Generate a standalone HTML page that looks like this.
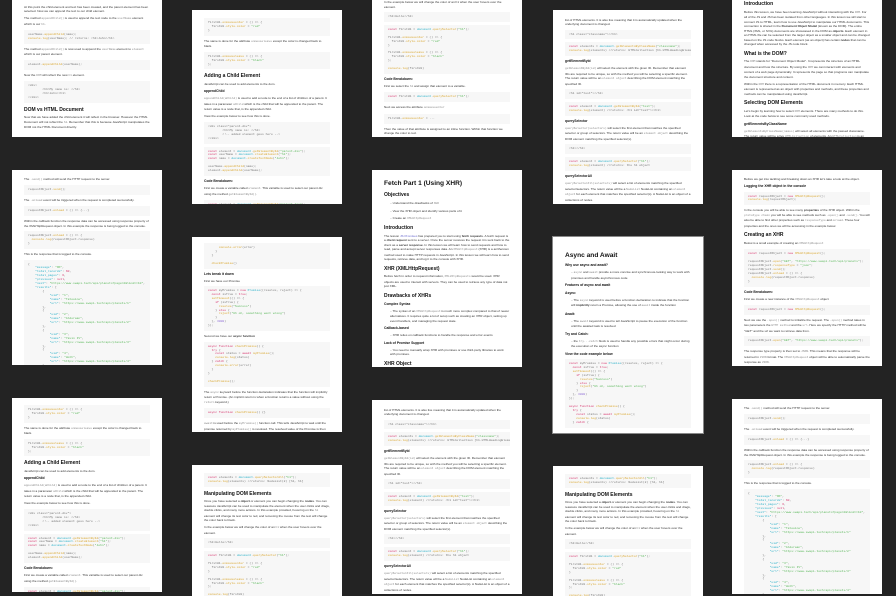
<!DOCTYPE html>
<html><head><meta charset="utf-8"><style>
*{margin:0;padding:0;box-sizing:border-box}
html,body{width:896px;height:596px;overflow:hidden;background:#232323;font-family:"Liberation Sans",sans-serif;color:#222}
.c{position:absolute;width:150px;background:#fff;overflow:hidden;padding:0 12px}
p,li{font-size:3.1px;line-height:4.5px;margin:2.5px 0;color:#333}
ul{padding-left:6px;list-style:none}
li:before{content:"– ";color:#777}
pre{font-family:"Liberation Mono",monospace;font-size:3px;line-height:3.9px;background:#f7f7f7;padding:3px 4px;margin:3px 0;color:#777;white-space:pre;overflow:hidden}
h1{font-size:6.6px;line-height:8px;font-weight:bold;margin:5px 0 3px;color:#111}
h2{font-size:5px;line-height:6px;font-weight:bold;margin:4px 0 2px;color:#111}
h3{font-size:3.4px;line-height:4.5px;font-weight:bold;margin:3px 0 2px;color:#111}
code{font-family:"Liberation Mono",monospace;color:#888;font-size:2.9px}
.k{color:#d6336c}.f{color:#2ab0c8}.s{color:#5cb85c}.m{color:#d9a62e}.v{color:#8f6ed5}
</style></head><body>

<div class="c" style="left:12px;top:0;height:137px;padding-top:2px">
<p>At this point the child element and text has been created, and the parent element has been selected. Now we can append the text to our child element.</p>
<p>The method <code>appendChild()</code> is used to append the text node to the <code>userName</code> element which is our <code>h1</code>.</p>
<pre>userName.<span class="m">appendChild</span>(name);
<span class="m">console.log</span>(userName); // returns: &lt;h1&gt;John&lt;/h1&gt;</pre>
<p>The method <code>appendChild()</code> is now used to append the <code>userName</code> element to <code>element</code> which is our parent element.</p>
<pre>element.<span class="m">appendChild</span>(userName);</pre>
<p>Now the <code>DOM</code> will reflect the new <code>h1</code> element.</p>
<pre>&lt;div&gt;
        &lt;h1&gt;My name is: &lt;/h1&gt;
        &lt;h1&gt;John&lt;/h1&gt;
&lt;/div&gt;</pre>
<h2>DOM vs HTML Document</h2>
<p>Now that we have added the child element it will reflect in the browser. However the HTML Document will not reflect the <code>h1</code>. Remember that this is because JavaScript manipulates the DOM not the HTML Document directly.</p>
</div>

<div class="c" style="left:12px;top:170px;height:195px;padding-top:4px">
<p>The <code>.send()</code> method will send the HTTP request to the server.</p>
<pre>requestObject.<span class="m">send</span>();</pre>
<p>The <code>.onload</code> event will be triggered when the request is completed successfully.</p>
<pre>requestObject.<span class="m">onload</span> = () =&gt; {...}</pre>
<p>Within the callback function the response data can be accessed using response property of the XMLHttpRequest object. In this example the response is being logged to the console.</p>
<pre>requestObject.<span class="m">onload</span> = () =&gt; {
  <span class="m">console.log</span>(requestObject.response)
}</pre>
<p>This is the response that is logged to the console.</p>
<pre>{
    <span class="f">"message"</span>: <span class="s">"OK"</span>,
    <span class="f">"total_records"</span>: <span class="k">60</span>,
    <span class="f">"total_pages"</span>: <span class="k">6</span>,
    <span class="f">"previous"</span>: <span class="k">null</span>,
    <span class="f">"next"</span>: <span class="s">"https://www.swapi.tech/api/planets?page=2&amp;limit=10"</span>,
    <span class="f">"results"</span>: [
        {
            <span class="f">"uid"</span>: <span class="s">"1"</span>,
            <span class="f">"name"</span>: <span class="s">"Tatooine"</span>,
            <span class="f">"url"</span>: <span class="s">"https://www.swapi.tech/api/planets/1"</span>
        },
        {
            <span class="f">"uid"</span>: <span class="s">"2"</span>,
            <span class="f">"name"</span>: <span class="s">"Alderaan"</span>,
            <span class="f">"url"</span>: <span class="s">"https://www.swapi.tech/api/planets/2"</span>
        },
        {
            <span class="f">"uid"</span>: <span class="s">"3"</span>,
            <span class="f">"name"</span>: <span class="s">"Yavin IV"</span>,
            <span class="f">"url"</span>: <span class="s">"https://www.swapi.tech/api/planets/3"</span>
        },
        {
            <span class="f">"uid"</span>: <span class="s">"4"</span>,
            <span class="f">"name"</span>: <span class="s">"Hoth"</span>,
            <span class="f">"url"</span>: <span class="s">"https://www.swapi.tech/api/planets/4"</span>
        },</pre>
</div>

<div class="c" style="left:12px;top:398px;height:194px;padding-top:4px">
<pre>firstH1.<span class="m">onmouseenter</span> = () =&gt; {
  firstH1.<span class="m">style.color</span> = <span class="s">"red"</span>
}</pre>
<p>The same is done for the attribute <code>onmouseleave</code> except the color is changed back to black.</p>
<pre>firstH1.<span class="m">onmouseleave</span> = () =&gt; {
  firstH1.<span class="m">style.color</span> = <span class="s">"black"</span>
};</pre>
<h2>Adding a Child Element</h2>
<p>JavaScript can be used to add elements to the dom.</p>
<h3>appendChild</h3>
<p><code>appendChild(aChild)</code> is used to add a node to the end of a list of children of a parent. It takes in a parameter <code>aChild</code> which is the child that will be appended to the parent. The return value is a node that, is the appended child.</p>
<p>View the example below to see how this is done.</p>
<pre>&lt;div class="parent-div"&gt;
        &lt;h1&gt;My name is: &lt;/h1&gt;
        &lt;!-- added element goes here --&gt;
&lt;/div&gt;</pre>
<pre><span class="k">const</span> element = <span class="f">document</span>.<span class="m">getElementById</span>(<span class="s">"parent-div"</span>);
<span class="k">const</span> userName = <span class="f">document</span>.<span class="m">createElement</span>(<span class="s">"h1"</span>);
<span class="k">const</span> name = <span class="f">document</span>.<span class="m">createTextNode</span>(<span class="s">"John"</span>);

userName.<span class="m">appendChild</span>(name);
element.<span class="m">appendChild</span>(userName);</pre>
<h3>Code Breakdown:</h3>
<p>First we create a variable called <code>element</code>. This variable is used to select our parent div using the method <code>getElementById()</code>.</p>
<pre><span class="k">const</span> element = <span class="f">document</span>.<span class="m">getElementById</span>(<span class="s">"parent-div"</span>);
<span class="m">console.log</span>(element); // returns: &lt;div id="parent-div"&gt;...&lt;/div&gt;</pre>
</div>

<div class="c" style="left:192px;top:10px;height:194px;padding-top:5px">
<pre>firstH1.<span class="m">onmouseenter</span> = () =&gt; {
  firstH1.<span class="m">style.color</span> = <span class="s">"red"</span>
}</pre>
<p>The same is done for the attribute <code>onmouseleave</code> except the color is changed back to black.</p>
<pre>firstH1.<span class="m">onmouseleave</span> = () =&gt; {
  firstH1.<span class="m">style.color</span> = <span class="s">"black"</span>
};</pre>
<h2>Adding a Child Element</h2>
<p>JavaScript can be used to add elements to the dom.</p>
<h3>appendChild</h3>
<p><code>appendChild(aChild)</code> is used to add a node to the end of a list of children of a parent. It takes in a parameter <code>aChild</code> which is the child that will be appended to the parent. The return value is a node that, is the appended child.</p>
<p>View the example below to see how this is done.</p>
<pre>&lt;div class="parent-div"&gt;
        &lt;h1&gt;My name is: &lt;/h1&gt;
        &lt;!-- added element goes here --&gt;
&lt;/div&gt;</pre>
<pre><span class="k">const</span> element = <span class="f">document</span>.<span class="m">getElementById</span>(<span class="s">"parent-div"</span>);
<span class="k">const</span> userName = <span class="f">document</span>.<span class="m">createElement</span>(<span class="s">"h1"</span>);
<span class="k">const</span> name = <span class="f">document</span>.<span class="m">createTextNode</span>(<span class="s">"John"</span>);

userName.<span class="m">appendChild</span>(name);
element.<span class="m">appendChild</span>(userName);</pre>
<h3>Code Breakdown:</h3>
<p>First we create a variable called <code>element</code>. This variable is used to select our parent div using the method <code>getElementById()</code>.</p>
<pre><span class="k">const</span> element = <span class="f">document</span>.<span class="m">getElementById</span>(<span class="s">"parent-div"</span>);
<span class="m">console.log</span>(element); // returns: &lt;div id="parent-div"&gt;...&lt;/div&gt;</pre>
</div>

<div class="c" style="left:192px;top:237px;height:195px;padding-top:3px">
<pre>      <span class="m">console.error</span>(error)
    }
  }

  <span class="m">checkPromise</span>()</pre>
<h3>Lets break it down</h3>
<p>First we have our Promise</p>
<pre><span class="k">const</span> myPromise = <span class="k">new</span> <span class="f">Promise</span>((resolve, reject) =&gt; {
  <span class="k">const</span> isTrue = <span class="k">true</span>;
  <span class="m">setTimeout</span>(() =&gt; {
    <span class="k">if</span> (isTrue) {
      <span class="m">resolve</span>(<span class="s">"Success"</span>)
    } <span class="k">else</span> {
      <span class="m">reject</span>(<span class="s">"Uh oh, something went wrong"</span>)
    }
  }, <span class="v">3000</span>)
});</pre>
<p>Second we have our <b>async function</b></p>
<pre><span class="k">async function</span> <span class="m">checkPromise</span>() {
  <span class="k">try</span> {
    <span class="k">const</span> status = <span class="k">await</span> <span class="m">myPromise</span>();
    <span class="m">console.log</span>(status)
  } <span class="k">catch</span> {
    <span class="m">console.error</span>(error)
  }
}

<span class="m">checkPromise</span>();</pre>
<p>The <code>async</code> keyword before the function declaration indicates that the function will implicitly return a Promise. (An implicit return is when a function returns a value without using the <code>return</code> keyword.)</p>
<pre><span class="k">async function</span> <span class="m">checkPromise</span>() {}</pre>
<p><code>await</code> is used before the <code>myPromise()</code> function call. This tells JavaScript to wait until the promise returned by <code>myPromise()</code> is resolved. The resolved value of the Promise is then assigned to the <code>status</code> variable.</p>
</div>

<div class="c" style="left:192px;top:465px;height:131px;padding-top:5px">
<pre><span class="k">const</span> elements = <span class="f">document</span>.<span class="m">querySelectorAll</span>(<span class="s">"h1"</span>);
<span class="m">console.log</span>(elements) //returns: NodeList(2) [h1, h1]</pre>
<h2>Manipulating DOM Elements</h2>
<p>Once you have selected a <b>object</b> or element you can begin changing the <b>nodes</b>. You can reassure JavaScript can be used to manipulate the element when the user clicks and drags, double clicks, and many more actions. In this example provided, hovering on the <code>h1</code> element will change its text color to red, and removing the mouse from the text will change the color back to black.</p>
<p>In the example below we will change the color of an <code>h1</code> when the user hovers over the element.</p>
<pre>&lt;h1&gt;Hello&lt;/h1&gt;</pre>
<pre><span class="k">const</span> firstH1 = <span class="f">document</span>.<span class="m">querySelector</span>(<span class="s">"h1"</span>);

firstH1.<span class="m">onmouseenter</span> = () =&gt; {
  firstH1.<span class="m">style.color</span> = <span class="s">"red"</span>
}

firstH1.<span class="m">onmouseleave</span> = () =&gt; {
  firstH1.<span class="m">style.color</span> = <span class="s">"black"</span>
};

<span class="m">console.log</span>(firstH1)</pre>
<h3>Code Breakdown:</h3>
</div>

<div class="c" style="left:372px;top:0;height:137px;padding-top:0">
<p style="margin-top:0">In the example below we will change the color of an h1 when the user hovers over the element.</p>
<pre>&lt;h1&gt;Hello&lt;/h1&gt;</pre>
<pre><span class="k">const</span> firstH1 = <span class="f">document</span>.<span class="m">querySelector</span>(<span class="s">"h1"</span>);

firstH1.<span class="m">onmouseenter</span> = () =&gt; {
  firstH1.<span class="m">style.color</span> = <span class="s">"red"</span>
}

firstH1.<span class="m">onmouseleave</span> = () =&gt; {
  firstH1.<span class="m">style.color</span> = <span class="s">"black"</span>
};

<span class="m">console.log</span>(firstH1)</pre>
<h3>Code Breakdown:</h3>
<p>First we select the <code>h1</code> and assign that element to a variable.</p>
<pre><span class="k">const</span> firstH1 = <span class="f">document</span>.<span class="m">querySelector</span>(<span class="s">"h1"</span>);</pre>
<p>Next we access the attribute <code>onmouseenter</code></p>
<pre>firstH1.<span class="m">onmouseenter</span> = ...</pre>
<p>Then the value of that attribute is assigned to an inline function. Within that function we change the color to red.</p>
</div>

<div class="c" style="left:372px;top:170px;height:197px;padding-top:5px">
<h1>Fetch Part 1 (Using XHR)</h1>
<h2>Objectives</h2>
<ul><li>Understand the drawbacks of <code>XHR</code></li><li>View the XHR object and identify various parts of it</li><li>Create an <code>XMLHttpRequest</code></li></ul>
<h2>Introduction</h2>
<p>The lesson <span style="color:#66c">JS Promises</span> has prepared you to start using <b>fetch requests</b>. A fetch request is a <b>client request</b> sent to a server. Once the server receives the request it is sent back to the client as a <b>server response</b>. In this lesson we will learn how to send requests and how to read, parse and accept server responses data. An <code>XMLHttpRequest</code> (XHR) is a an/the/own method used to make HTTP requests in JavaScript. In this lesson we will learn how to send requests, retrieve data, and log it to the console with XHR.</p>
<h2>XHR (XMLHttpRequest)</h2>
<p>Before fetch in order to request information, <code>XMLHttpRequests</code> would be used. XHR objects are used to interact with servers. They can be used to retrieve any type of data not just XML.</p>
<h2>Drawbacks of XHRs</h2>
<h3>Complex Syntax</h3>
<ul><li>The syntax of an <code>XMLHttpRequest</code> is much more complex compared to that of newer alternatives. It requires quite a lot of setup such as creating an XHR object, setting up event handlers, and managing the request state.</li></ul>
<h3>Callback-based</h3>
<ul><li>XHR relies on callback functions to handle the response and error events</li></ul>
<h3>Lack of Promise Support</h3>
<ul><li>You need to manually wrap XHR with promises or use third-party libraries to work with promises.</li></ul>
<h2>XHR Object</h2>
</div>

<div class="c" style="left:372px;top:400px;height:194px;padding-top:5px">
<p>list of HTML elements. It is also live meaning that it is automatically updated when the underlying document is changed.</p>
<pre>&lt;h1 class="classname"&gt;&lt;/h1&gt;</pre>
<pre><span class="k">const</span> elements = <span class="f">document</span>.<span class="m">getElementsByClassName</span>(<span class="s">"classname"</span>);
<span class="m">console.log</span>(elements) //returns: HTMLCollection [h1.HTMLHeadingElement]</pre>
<h3>getElementById</h3>
<p><code>getElementById(id)</code> will select the element with the given ID. Remember that element IDs are required to be unique, so with the method you will be selecting a specific element. The return value will be an <code>element object</code> describing the DOM element matching the specified ID.</p>
<pre>&lt;h1 id="test"&gt;&lt;/h1&gt;</pre>
<pre><span class="k">const</span> element = <span class="f">document</span>.<span class="m">getElementById</span>(<span class="s">"test"</span>);
<span class="m">console.log</span>(element) //returns: &lt;h1 id="test"&gt;&lt;/h1&gt;</pre>
<h3>querySelector</h3>
<p><code>querySelector(selectors)</code> will select the first element that matches the specified selector or group of selectors. The return value will be an <code>element object</code> describing the DOM element matching the specified selector(s).</p>
<pre>&lt;h1&gt;&lt;/h1&gt;</pre>
<pre><span class="k">const</span> element = <span class="f">document</span>.<span class="m">querySelector</span>(<span class="s">"h1"</span>);
<span class="m">console.log</span>(element) //returns: the h1 object</pre>
<h3>querySelectorAll</h3>
<p><code>querySelectorAll(selectors)</code> will select a list of elements matching the specified selector/selectors. The return value will be a <code>NodeList</code> NodeList containing an <code>element object</code> for each element that matches the specified selector(s). A NodeList is an object of a collections of nodes.</p>
<pre>&lt;h1&gt;&lt;/h1&gt;
&lt;h1&gt;this is two&lt;/h1&gt;
&lt;h1&gt;this is an h1&lt;/h1&gt;</pre>
</div>

<div class="c" style="left:553px;top:10px;height:194px;padding-top:5px">
<p>list of HTML elements. It is also live meaning that it is automatically updated when the underlying document is changed.</p>
<pre>&lt;h1 class="classname"&gt;&lt;/h1&gt;</pre>
<pre><span class="k">const</span> elements = <span class="f">document</span>.<span class="m">getElementsByClassName</span>(<span class="s">"classname"</span>);
<span class="m">console.log</span>(elements) //returns: HTMLCollection [h1.HTMLHeadingElement]</pre>
<h3>getElementById</h3>
<p><code>getElementById(id)</code> will select the element with the given ID. Remember that element IDs are required to be unique, so with the method you will be selecting a specific element. The return value will be an <code>element object</code> describing the DOM element matching the specified ID.</p>
<pre>&lt;h1 id="test"&gt;&lt;/h1&gt;</pre>
<pre><span class="k">const</span> element = <span class="f">document</span>.<span class="m">getElementById</span>(<span class="s">"test"</span>);
<span class="m">console.log</span>(element) //returns: &lt;h1 id="test"&gt;&lt;/h1&gt;</pre>
<h3>querySelector</h3>
<p><code>querySelector(selectors)</code> will select the first element that matches the specified selector or group of selectors. The return value will be an <code>element object</code> describing the DOM element matching the specified selector(s).</p>
<pre>&lt;h1&gt;&lt;/h1&gt;</pre>
<pre><span class="k">const</span> element = <span class="f">document</span>.<span class="m">querySelector</span>(<span class="s">"h1"</span>);
<span class="m">console.log</span>(element) //returns: the h1 object</pre>
<h3>querySelectorAll</h3>
<p><code>querySelectorAll(selectors)</code> will select a list of elements matching the specified selector/selectors. The return value will be a <code>NodeList</code> NodeList containing an <code>element object</code> for each element that matches the specified selector(s). A NodeList is an object of a collections of nodes.</p>
<pre>&lt;h1&gt;&lt;/h1&gt;
&lt;h1&gt;this is two&lt;/h1&gt;
&lt;h1&gt;this is an h1&lt;/h1&gt;</pre>
</div>

<div class="c" style="left:553px;top:237px;height:196px;padding-top:10px;box-shadow:0 0 0 1px #888">
<h1>Async and Await</h1>
<h3>Why use async and await?</h3>
<ul><li><code>async</code> and <code>await</code> provide a more concise and synchronous-looking way to work with promises and handle asynchronous code</li></ul>
<h3>Features of async and await</h3>
<h3>Async:</h3>
<ul><li>The <code>async</code> keyword is used before a function declaration to indicate that the function will <b>implicitly</b> return a Promise, allowing the use of <code>await</code> inside the function</li></ul>
<h3>Await:</h3>
<ul><li>The <code>await</code> keyword is used to tell JavaScript to pause the execution of the function until the awaited task is resolved</li></ul>
<h3>Try and Catch:</h3>
<ul><li>the <code>try...catch</code> block is used to handle any possible errors that might occur during the execution of the async function</li></ul>
<h3>View the code example below</h3>
<pre><span class="k">const</span> myPromise = <span class="k">new</span> <span class="f">Promise</span>((resolve, reject) =&gt; {
  <span class="k">const</span> isTrue = <span class="k">true</span>;
  <span class="m">setTimeout</span>(() =&gt; {
    <span class="k">if</span> (isTrue) {
      <span class="m">resolve</span>(<span class="s">"Success"</span>)
    } <span class="k">else</span> {
      <span class="m">reject</span>(<span class="s">"Uh oh, something went wrong"</span>)
    }
  }, <span class="v">3000</span>)
});

<span class="k">async function</span> <span class="m">checkPromise</span>() {
  <span class="k">try</span> {
    <span class="k">const</span> status = <span class="k">await</span> <span class="m">myPromise</span>();
    <span class="m">console.log</span>(status)
  } <span class="k">catch</span> {</pre>
</div>

<div class="c" style="left:553px;top:466px;height:130px;padding-top:5px">
<pre><span class="k">const</span> elements = <span class="f">document</span>.<span class="m">querySelectorAll</span>(<span class="s">"h1"</span>);
<span class="m">console.log</span>(elements) //returns: NodeList(2) [h1, h1]</pre>
<h2>Manipulating DOM Elements</h2>
<p>Once you have selected a <b>object</b> or element you can begin changing the <b>nodes</b>. You can reassure JavaScript can be used to manipulate the element when the user clicks and drags, double clicks, and many more actions. In this example provided, hovering on the <code>h1</code> element will change its text color to red, and removing the mouse from the text will change the color back to black.</p>
<p>In the example below we will change the color of an <code>h1</code> when the user hovers over the element.</p>
<pre>&lt;h1&gt;Hello&lt;/h1&gt;</pre>
<pre><span class="k">const</span> firstH1 = <span class="f">document</span>.<span class="m">querySelector</span>(<span class="s">"h1"</span>);

firstH1.<span class="m">onmouseenter</span> = () =&gt; {
  firstH1.<span class="m">style.color</span> = <span class="s">"red"</span>
}

firstH1.<span class="m">onmouseleave</span> = () =&gt; {
  firstH1.<span class="m">style.color</span> = <span class="s">"black"</span>
};

<span class="m">console.log</span>(firstH1)</pre>
<h3>Code Breakdown:</h3>
</div>

<div class="c" style="left:732px;top:0;height:137px;padding-top:0">
<h2 style="margin-top:1px">Introduction</h2>
<p>Before this lesson, we have been learning JavaScript without interacting with the <code>DOM</code>. For all of the JS and JS has been isolated from other languages. In this lesson we will start to connect JS to HTML, learn how to use JavaScript to manipulate our HTML documents. This connection is shared in the <b>Document Object Model</b> (known as the DOM). The entire HTML (XML, or SVG) documents are showcased in the DOM as <b>objects</b>. Each element in an HTML file can be selected from the larger object as a smaller object and can be changed based on the JS code blocks. Each element (as an object) has certain <b>nodes</b> that can be changed when accessed by the JS code block.</p>
<h2>What is the DOM?</h2>
<p>The <code>DOM</code> stands for "Document Object Model". It represents the structure of an HTML document and how the structure. By using the <code>DOM</code> we can interact with elements and content of a web page dynamically. It represents the page so that programs can manipulate the document structure and content.</p>
<p>Within the <code>DOM</code> there is a representation of the HTML document in memory. Each HTML element is represented as an object with properties and methods, and these properties and methods can be manipulated using JavaScript.</p>
<h2>Selecting DOM Elements</h2>
<p>Let's begin by learning how to select <code>DOM</code> elements. There are many methods to do this. Look at the code below to see some commonly used methods.</p>
<h3>getElementsByClassName</h3>
<p><code>getElementsByClassName(names)</code> will select all elements with the passed classname. The return value will be a live <code>HTMLCollection</code> of elements. An <code>HTMLCollection</code> is an array-like</p>
</div>

<div class="c" style="left:732px;top:170px;height:196px;padding-top:4px">
<p>Before we get into tackling and breaking down an XHR let's take a look at the object.</p>
<h3>Logging the XHR object in the console</h3>
<pre><span class="k">const</span> requestObject = <span class="k">new</span> <span class="m">XMLHttpRequest</span>();
<span class="m">console.log</span>(requestObject);</pre>
<p>In the console you will be able to see many <b>properties</b> of the XHR object. Within the <code>prototype chain</code> you will be able to see methods such as <code>.open()</code> and <code>.send()</code>. You will also be able to find other properties such as <code>responseType</code> and <code>onload</code>. These four properties and the ones we will be accessing in the example below.</p>
<h2>Creating an XHR</h2>
<p>Below is a small example of creating an <code>XMLHttpRequest</code></p>
<pre><span class="k">const</span> requestObject = <span class="k">new</span> <span class="m">XMLHttpRequest</span>();

requestObject.<span class="m">open</span>(<span class="s">"GET"</span>, <span class="s">"https://www.swapi.tech/api/planets"</span>);
requestObject.<span class="m">responseType</span> = <span class="s">"json"</span>;
requestObject.<span class="m">send</span>();
requestObject.<span class="m">onload</span> = () =&gt; {
  <span class="m">console.log</span>(requestObject.response)
}</pre>
<h3>Code Breakdown:</h3>
<p>First we create a new instance of the <code>XMLHttpRequest</code> object</p>
<pre><span class="k">const</span> requestObject = <span class="k">new</span> <span class="m">XMLHttpRequest</span>();</pre>
<p>Next we use the <code>.open()</code> method to initialize the request. The <code>.open()</code> method takes in two parameters the <code>HTTP method</code> and the <code>url</code>. Here we specify the HTTP method will be "GET" and the url we want to retrieve data from.</p>
<pre>requestObject.<span class="m">open</span>(<span class="s">"GET"</span>, <span class="s">"https://www.swapi.tech/api/planets"</span>);</pre>
<p>The response type property is then set to <code>JSON</code>. This means that the response will be returned in <code>JSON</code> format. The <code>XMLHttpRequest</code> object will be able to automatically parse the response as <code>JSON</code>.</p>
<pre>requestObject.<span class="m">responseType</span> = <span class="s">"json"</span>;</pre>
</div>

<div class="c" style="left:732px;top:399px;height:195px;padding-top:4px">
<p>The <code>.send()</code> method will send the HTTP request to the server.</p>
<pre>requestObject.<span class="m">send</span>();</pre>
<p>The <code>.onload</code> event will be triggered when the request is completed successfully.</p>
<pre>requestObject.<span class="m">onload</span> = () =&gt; {...}</pre>
<p>Within the callback function the response data can be accessed using response property of the XMLHttpRequest object. In this example the response is being logged to the console.</p>
<pre>requestObject.<span class="m">onload</span> = () =&gt; {
  <span class="m">console.log</span>(requestObject.response)
}</pre>
<p>This is the response that is logged to the console.</p>
<pre>{
    <span class="f">"message"</span>: <span class="s">"OK"</span>,
    <span class="f">"total_records"</span>: <span class="k">60</span>,
    <span class="f">"total_pages"</span>: <span class="k">6</span>,
    <span class="f">"previous"</span>: <span class="k">null</span>,
    <span class="f">"next"</span>: <span class="s">"https://www.swapi.tech/api/planets?page=2&amp;limit=10"</span>,
    <span class="f">"results"</span>: [
        {
            <span class="f">"uid"</span>: <span class="s">"1"</span>,
            <span class="f">"name"</span>: <span class="s">"Tatooine"</span>,
            <span class="f">"url"</span>: <span class="s">"https://www.swapi.tech/api/planets/1"</span>
        },
        {
            <span class="f">"uid"</span>: <span class="s">"2"</span>,
            <span class="f">"name"</span>: <span class="s">"Alderaan"</span>,
            <span class="f">"url"</span>: <span class="s">"https://www.swapi.tech/api/planets/2"</span>
        },
        {
            <span class="f">"uid"</span>: <span class="s">"3"</span>,
            <span class="f">"name"</span>: <span class="s">"Yavin IV"</span>,
            <span class="f">"url"</span>: <span class="s">"https://www.swapi.tech/api/planets/3"</span>
        },
        {
            <span class="f">"uid"</span>: <span class="s">"4"</span>,
            <span class="f">"name"</span>: <span class="s">"Hoth"</span>,
            <span class="f">"url"</span>: <span class="s">"https://www.swapi.tech/api/planets/4"</span>
        },</pre>
</div>

</body></html>
